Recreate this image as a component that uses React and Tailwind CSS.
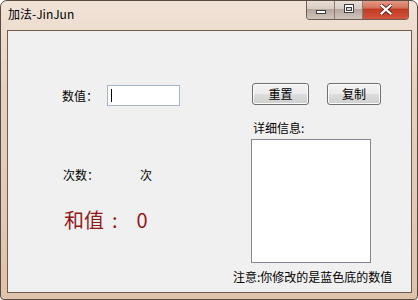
import React from "react";

const font = { fontFamily: '"Noto Sans CJK SC", "Noto Sans", sans-serif' };

function CaptionButtons() {
  return (
    <div className="flex h-[20px] -mt-px mr-[8px] rounded-b-[4px] border border-t-0 border-[#6e5d52] overflow-hidden">
      <div className="w-[28px] h-full flex items-end justify-center pb-[5px] bg-[linear-gradient(to_bottom,#ebe2da_0%,#d8ccc3_45%,#b5a79d_50%,#d0c4bb_100%)] border-r border-[#8c7b70]">
        <div className="w-[10px] h-[4px] bg-white border border-[#3c3c3c]" />
      </div>
      <div className="w-[28px] h-full flex items-start justify-center pt-[4px] bg-[linear-gradient(to_bottom,#ebe2da_0%,#d8ccc3_45%,#b5a79d_50%,#d0c4bb_100%)] border-r border-[#8c7b70]">
        <div className="w-[10px] h-[9px] border border-[#3c3c3c] bg-white flex items-center justify-center">
          <div className="w-[6px] h-[4px] mt-[1px] border border-[#3c3c3c] bg-[#d8d8d8]" />
        </div>
      </div>
      <div className="w-[45px] h-full flex items-start justify-center pt-[4px] bg-[linear-gradient(to_bottom,#e6a090_0%,#d6735c_40%,#c23c25_50%,#d2553b_100%)]">
        <svg width="12" height="11" viewBox="0 0 12 11">
          <path d="M1.5 1.5 L10.5 9.5 M10.5 1.5 L1.5 9.5" stroke="#5a2218" strokeWidth="4" strokeLinecap="square" />
          <path d="M1.5 1.5 L10.5 9.5 M10.5 1.5 L1.5 9.5" stroke="#ffffff" strokeWidth="2.2" strokeLinecap="square" />
        </svg>
      </div>
    </div>
  );
}

function WinButton({ children, w }) {
  return (
    <div
      className={`${w} h-[22px] rounded-[3px] border border-[#707070] bg-[linear-gradient(to_bottom,#f3f3f3_0%,#ebebeb_48%,#dddddd_52%,#cfcfcf_100%)] flex items-center justify-center text-[12px] text-black shadow-[inset_0_0_0_1px_#fbfbfb]`}
    >
      {children}
    </div>
  );
}

export default function App() {
  return (
    <div
      className="w-[418px] h-[300px] flex flex-col rounded-t-[7px] rounded-b-[4px] border border-[#5a4a40] bg-[linear-gradient(to_bottom,#f1e3d7_0%,#e6d1bf_30%,#dec3ad_100%)] overflow-hidden"
      style={font}
    >
      <div className="h-[29px] flex items-start justify-between shrink-0">
        <span className="ml-[7px] mt-[5px] text-[12px] leading-[16px] text-black">加法-JinJun</span>
        <CaptionButtons />
      </div>
      <div className="ml-[6px] mr-[5px] h-[263px] border border-[#6f5c4f] bg-[#f0f0f0] text-[12px] leading-[16px] text-black">
        <div className="flex">
          <div className="w-[243px] pl-[54px] pt-[54px] flex flex-col">
            <div className="flex items-center h-[21px]">
              <span className="w-[45px]">数值：</span>
              <div className="w-[73px] h-[21px] border border-[#a4b6c8] bg-white flex items-center pl-[3px]">
                <div className="w-px h-[13px] bg-black" />
              </div>
            </div>
            <div className="flex mt-[61px] pl-[1px] h-[16px]">
              <span className="w-[77px]">次数：</span>
              <span>次</span>
            </div>
            <div className="flex mt-[23px] pl-[2px] h-[28px] items-center text-[20px] leading-[28px] text-[#921818]">
              <span>和值</span>
              <span className="ml-[8px]">:</span>
              <span className="ml-[19px]">0</span>
            </div>
          </div>
          <div className="pt-[52px] flex flex-col">
            <div className="flex gap-[18px] pl-[1px]">
              <WinButton w="w-[57px]">重置</WinButton>
              <WinButton w="w-[54px]">复制</WinButton>
            </div>
            <div className="mt-[15px] ml-[2px] h-[16px]">详细信息:</div>
            <div className="mt-[3px] w-[120px] h-[124px] border border-[#828790] bg-white" />
          </div>
        </div>
        <div className="pl-[225px] mt-[6px]">注意:你修改的是蓝色底的数值</div>
      </div>
    </div>
  );
}
